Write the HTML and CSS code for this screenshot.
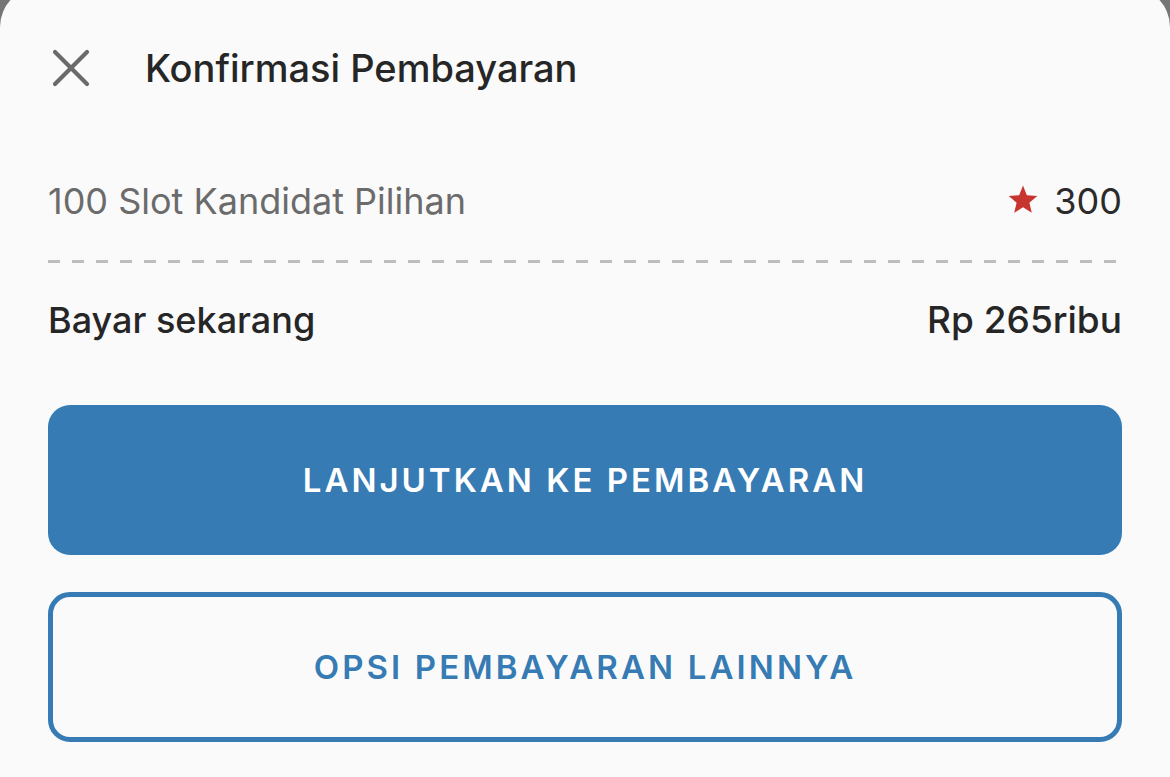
FILE: index.html
```html
<!DOCTYPE html>
<html lang="id">
<head>
<meta charset="utf-8">
<link rel="stylesheet" href="styles.css">
</head>
<body>
<div class="sheet">
  <header class="header">
    <button class="close" aria-label="Tutup">
      <svg width="38" height="38" viewBox="0 0 38 38"><path d="M3 3 L35 35 M35 3 L3 35" stroke="#6a6a6a" stroke-width="4.2" stroke-linecap="round" fill="none"/></svg>
    </button>
    <h1 class="title">Konfirmasi Pembayaran</h1>
  </header>
  <div class="row item">
    <span class="item-label">100 Slot Kandidat Pilihan</span>
    <span class="item-value">
      <svg class="star" width="32" height="32" viewBox="0 0 24 24"><path d="M12 1.2 L14.9 8.4 L22.7 9 L16.8 14 L18.6 21.6 L12 17.5 L5.4 21.6 L7.2 14 L1.3 9 L9.1 8.4 Z" fill="#c8352f"/></svg>
      <span>300</span>
    </span>
  </div>
  <div class="divider"></div>
  <div class="row total">
    <span>Bayar sekarang</span>
    <span>Rp 265ribu</span>
  </div>
  <button class="btn btn-primary">LANJUTKAN KE PEMBAYARAN</button>
  <button class="btn btn-outline">OPSI PEMBAYARAN LAINNYA</button>
</div>
</body>
</html>
```
FILE: styles.css
```css
* { box-sizing: border-box; }
html, body {
  margin: 0;
  padding: 0;
  height: 100%;
  overflow: hidden;
}
body {
  background: #767676;
  font-family: Inter, "Noto Sans", Roboto, sans-serif;
}
.sheet {
  margin-top: -13px;
  padding: 13px 48px 0 48px;
  background: #fafafa;
  border-radius: 40px 40px 0 0;
  min-height: 800px;
  display: flex;
  flex-direction: column;
}
.header {
  height: 136px;
  display: flex;
  align-items: center;
}
.close {
  border: 0;
  background: none;
  padding: 0;
  margin-left: 4px;
  width: 38px;
  height: 38px;
  display: flex;
}
.title {
  margin: 0 0 0 55px;
  font-size: 38px;
  font-weight: 500;
  color: #262626;
  line-height: 46px;
}
.row {
  display: flex;
  justify-content: space-between;
  align-items: center;
  height: 60px;
  font-size: 36px;
  line-height: 46px;
}
.item {
  margin-top: 35px;
  color: #6b6b6b;
}
.item-value {
  display: flex;
  align-items: center;
  gap: 15px;
  color: #2b2b2b;
}
.star { margin-top: -3px; }
.divider {
  margin-top: 29px;
  height: 3px;
  background-image: linear-gradient(to right, #bdbdbd 0 12px, transparent 12px 24px);
  background-size: 24px 3px;
  background-repeat: repeat-x;
}
.total {
  margin-top: 27px;
  color: #262626;
  font-weight: 500;
}
.total span:last-child { font-size: 37px; }
.btn {
  font-family: inherit;
  width: 100%;
  height: 150px;
  border-radius: 22px;
  font-size: 33px;
  font-weight: 600;
  letter-spacing: 3px;
  display: flex;
  align-items: center;
  justify-content: center;
}
.btn-primary {
  margin-top: 55px;
  background: #367bb3;
  color: #ffffff;
  border: 0;
}
.btn-outline {
  margin-top: 37px;
  background: #fafafa;
  color: #367bb3;
  border: 5px solid #367bb3;
  letter-spacing: 3.1px;
}
```
